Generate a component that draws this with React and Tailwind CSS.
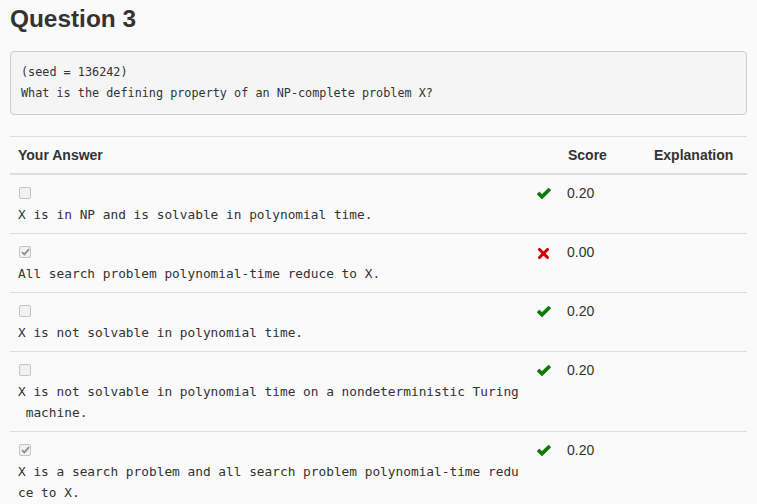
import React from "react";

const mono = { fontFamily: '"DejaVu Sans Mono", "Liberation Mono", monospace' };

function Check() {
  return (
    <svg width="14" height="12" viewBox="0 0 14 12" className="block mt-[5px]">
      <polygon points="0,6.2 2.3,3.9 5,6.4 11.6,0 13.9,2.3 5,11" fill="#008000" stroke="#1d4d12" strokeWidth="0.5" />
    </svg>
  );
}

function Cross() {
  return (
    <svg width="11" height="11" viewBox="0 0 11 11" className="block mt-[6px] ml-[1px]">
      <path d="M1.5 1.5 L9.5 9.5 M9.5 1.5 L1.5 9.5" stroke="#cc0000" strokeWidth="3" strokeLinecap="square" />
    </svg>
  );
}

function Box({ checked }) {
  return (
    <div className="h-[21px] pt-[4px]">
      <div className="w-[12px] h-[12px] ml-[1px] rounded-[2px] border border-[#c4c4c4] bg-[#f1f1f1] flex items-center justify-center">
        {checked && (
          <svg width="9" height="8" viewBox="0 0 9 8">
            <path d="M1 4.2 L3.4 6.4 L8 1.2" stroke="#8c8c8c" strokeWidth="1.8" fill="none" />
          </svg>
        )}
      </div>
    </div>
  );
}

const rows = [
  { checked: false, ok: true, score: "0.20", text: "X is in NP and is solvable in polynomial time." },
  { checked: true, ok: false, score: "0.00", text: "All search problem polynomial-time reduce to X." },
  { checked: false, ok: true, score: "0.20", text: "X is not solvable in polynomial time." },
  { checked: false, ok: true, score: "0.20", text: "X is not solvable in polynomial time on a nondeterministic Turing\n machine." },
  { checked: true, ok: true, score: "0.20", text: "X is a search problem and all search problem polynomial-time redu\nce to X." },
];

export default function App() {
  return (
    <div className="min-h-screen bg-[#fafafa] text-[#333] px-[10px] pt-[6px]" style={{ fontFamily: '"Liberation Sans", Arial, sans-serif' }}>
      <h3 className="text-[24.4px] leading-[26.4px] font-bold m-0">Question 3</h3>
      <div className="mt-[19px] border border-[#cccccc] rounded-[4px] bg-[#f5f5f5] px-[10px] py-[10px] text-[11.8px] leading-[21px] whitespace-pre" style={mono}>
        <div>(seed = 136242)</div>
        <div>What is the defining property of an NP-complete problem X?</div>
      </div>
      <div className="mt-[21px] border-t border-[#dddddd]">
        <div className="grid grid-cols-[519px_30px_87px_1fr] border-b-2 border-[#dddddd] text-[14px] leading-[20px] font-bold">
          <div className="p-[8px]">Your Answer</div>
          <div className="p-[8px]"></div>
          <div className="p-[8px] pl-[9px]">Score</div>
          <div className="p-[8px]">Explanation</div>
        </div>
        {rows.map((r, i) => (
          <div key={i} className="grid grid-cols-[519px_30px_87px_1fr] border-b border-[#dddddd]">
            <div className="p-[8px]">
              <Box checked={r.checked} />
              <div className="text-[12.8px] leading-[21px] whitespace-pre" style={mono}>{r.text}</div>
            </div>
            <div className="p-[8px]">{r.ok ? <Check /> : <Cross />}</div>
            <div className="p-[8px] text-[14px] leading-[21px]">{r.score}</div>
            <div className="p-[8px]"></div>
          </div>
        ))}
      </div>
    </div>
  );
}
